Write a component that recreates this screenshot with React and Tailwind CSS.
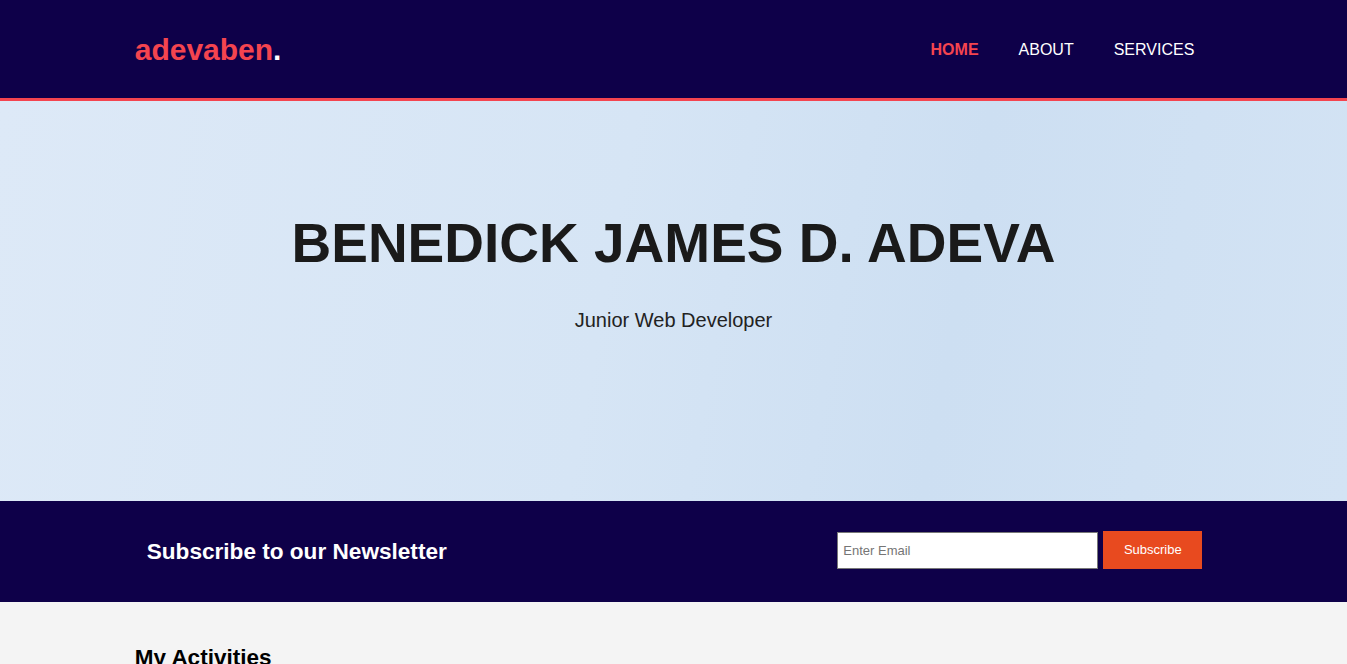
import React from "react";

export default function App() {
  return (
    <div className="min-h-screen bg-[#f4f4f4]" style={{ fontFamily: '"Liberation Sans", Arial, sans-serif' }}>
      <header className="bg-[#0e0049] border-b-[3px] border-[#f4444f]">
        <div className="w-[80%] mx-auto h-[98px] flex items-center justify-between">
          <a className="text-[30px] font-bold text-[#f4444f] leading-none mt-[2px]">
            adevaben<span className="text-white">.</span>
          </a>
          <nav className="flex items-center gap-[40px] pr-[18px] text-[16px] uppercase mt-[2px]">
            <a className="text-[#f4444f] font-bold">Home</a>
            <a className="text-white">About</a>
            <a className="text-white">Services</a>
          </nav>
        </div>
      </header>

      <section className="h-[400px] bg-[linear-gradient(100deg,#dde9f7_0%,#d6e5f5_45%,#cddff2_70%,#d3e3f4_100%)] flex flex-col items-center justify-center pb-[52px]">
        <h1 className="text-[55px] font-bold text-[#1a1a1a] leading-none">
          BENEDICK JAMES D. ADEVA
        </h1>
        <p className="mt-[34px] text-[20px] text-[#222]">Junior Web Developer</p>
      </section>

      <section className="bg-[#0e0049] h-[101px]">
        <div className="w-[80%] mx-auto h-full flex items-center justify-between pl-[12px] pr-[10px]">
          <h2 className="text-[22.6px] font-bold text-white">Subscribe to our Newsletter</h2>
          <form className="flex items-center gap-[5px] mt-[-3px]" onSubmit={(e) => e.preventDefault()}>
            <input
              type="email"
              placeholder="Enter Email"
              className="w-[261px] h-[37px] bg-white border border-[#777] px-[5px] text-[13px] placeholder:text-[#757575] outline-none"
            />
            <button className="w-[99px] h-[38px] bg-[#e84a1f] text-white text-[13px]">Subscribe</button>
          </form>
        </div>
      </section>

      <section className="w-[80%] mx-auto pt-[39px]">
        <h2 className="text-[22.5px] font-bold text-black">My Activities</h2>
      </section>
    </div>
  );
}
